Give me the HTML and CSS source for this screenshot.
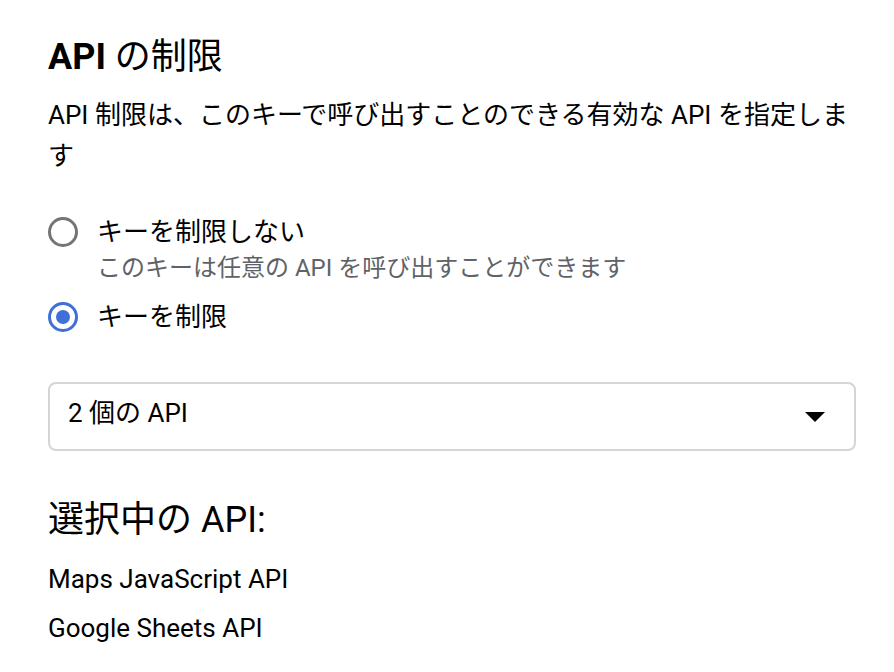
FILE: index.html
```html
<!DOCTYPE html>
<html lang="ja">
<head>
<meta charset="utf-8">
<link rel="stylesheet" href="styles.css">
</head>
<body>
<main class="panel">
  <h1 class="title"><b>API</b> の制限</h1>
  <p class="desc">API 制限は、このキーで呼び出すことのできる有効な API を指定します</p>
  <div class="options">
    <div class="option">
      <div class="row">
        <span class="radio"></span>
        <span class="label">キーを制限しない</span>
      </div>
      <div class="hint">このキーは任意の API を呼び出すことができます</div>
    </div>
    <div class="option">
      <div class="row">
        <span class="radio checked"></span>
        <span class="label">キーを制限</span>
      </div>
    </div>
  </div>
  <div class="select">
    <span class="select-text">2 個の API</span>
    <svg class="caret" width="20" height="10" viewBox="0 0 20 10"><path d="M0 0H20L10 10Z" fill="#000"/></svg>
  </div>
  <h2 class="subtitle">選択中の API:</h2>
  <ul class="apis">
    <li>Maps JavaScript API</li>
    <li>Google Sheets API</li>
  </ul>
</main>
</body>
</html>
```
FILE: styles.css
```css
html, body {
  margin: 0;
  padding: 0;
  background: #fff;
}
body {
  font-family: Roboto, "Noto Sans CJK JP", sans-serif;
  color: #202124;
}
.panel {
  width: 808px;
  padding: 33px 0 0 48px;
}
.title {
  margin: 0;
  font-size: 36px;
  font-weight: 400;
  line-height: 48px;
  color: #000;
}
.title b {
  font-weight: 700;
}
.desc {
  margin: 14px 0 0;
  font-size: 26px;
  line-height: 41px;
  color: #000;
}
.options {
  margin-top: 37px;
  display: flex;
  flex-direction: column;
  gap: 13px;
}
.row {
  display: flex;
  align-items: center;
  gap: 19px;
  height: 36px;
}
.radio {
  box-sizing: border-box;
  width: 30px;
  height: 30px;
  border: 3.5px solid #757575;
  border-radius: 50%;
  display: flex;
  align-items: center;
  justify-content: center;
}
.radio.checked {
  border-color: #3f6fd8;
}
.radio.checked::after {
  content: "";
  width: 14px;
  height: 14px;
  border-radius: 50%;
  background: #3f6fd8;
}
.label {
  font-size: 26px;
  line-height: 36px;
  color: #000;
}
.hint {
  padding-left: 49px;
  font-size: 24px;
  line-height: 36px;
  color: #5f6368;
}
.select {
  box-sizing: border-box;
  margin-top: 47px;
  height: 69px;
  border: 2px solid #d5d5d5;
  border-radius: 8px;
  display: flex;
  align-items: center;
  justify-content: space-between;
  padding: 0 29px 0 18px;
}
.select-text {
  font-size: 26px;
  line-height: 36px;
  margin-bottom: 7px;
  color: #000;
}
.caret {
  display: block;
}
.subtitle {
  margin: 45px 0 0;
  font-size: 36px;
  font-weight: 400;
  line-height: 48px;
  color: #000;
}
.apis {
  list-style: none;
  margin: 11px 0 0;
  padding: 0;
}
.apis li {
  font-size: 26px;
  line-height: 49px;
  color: #000;
}
```
